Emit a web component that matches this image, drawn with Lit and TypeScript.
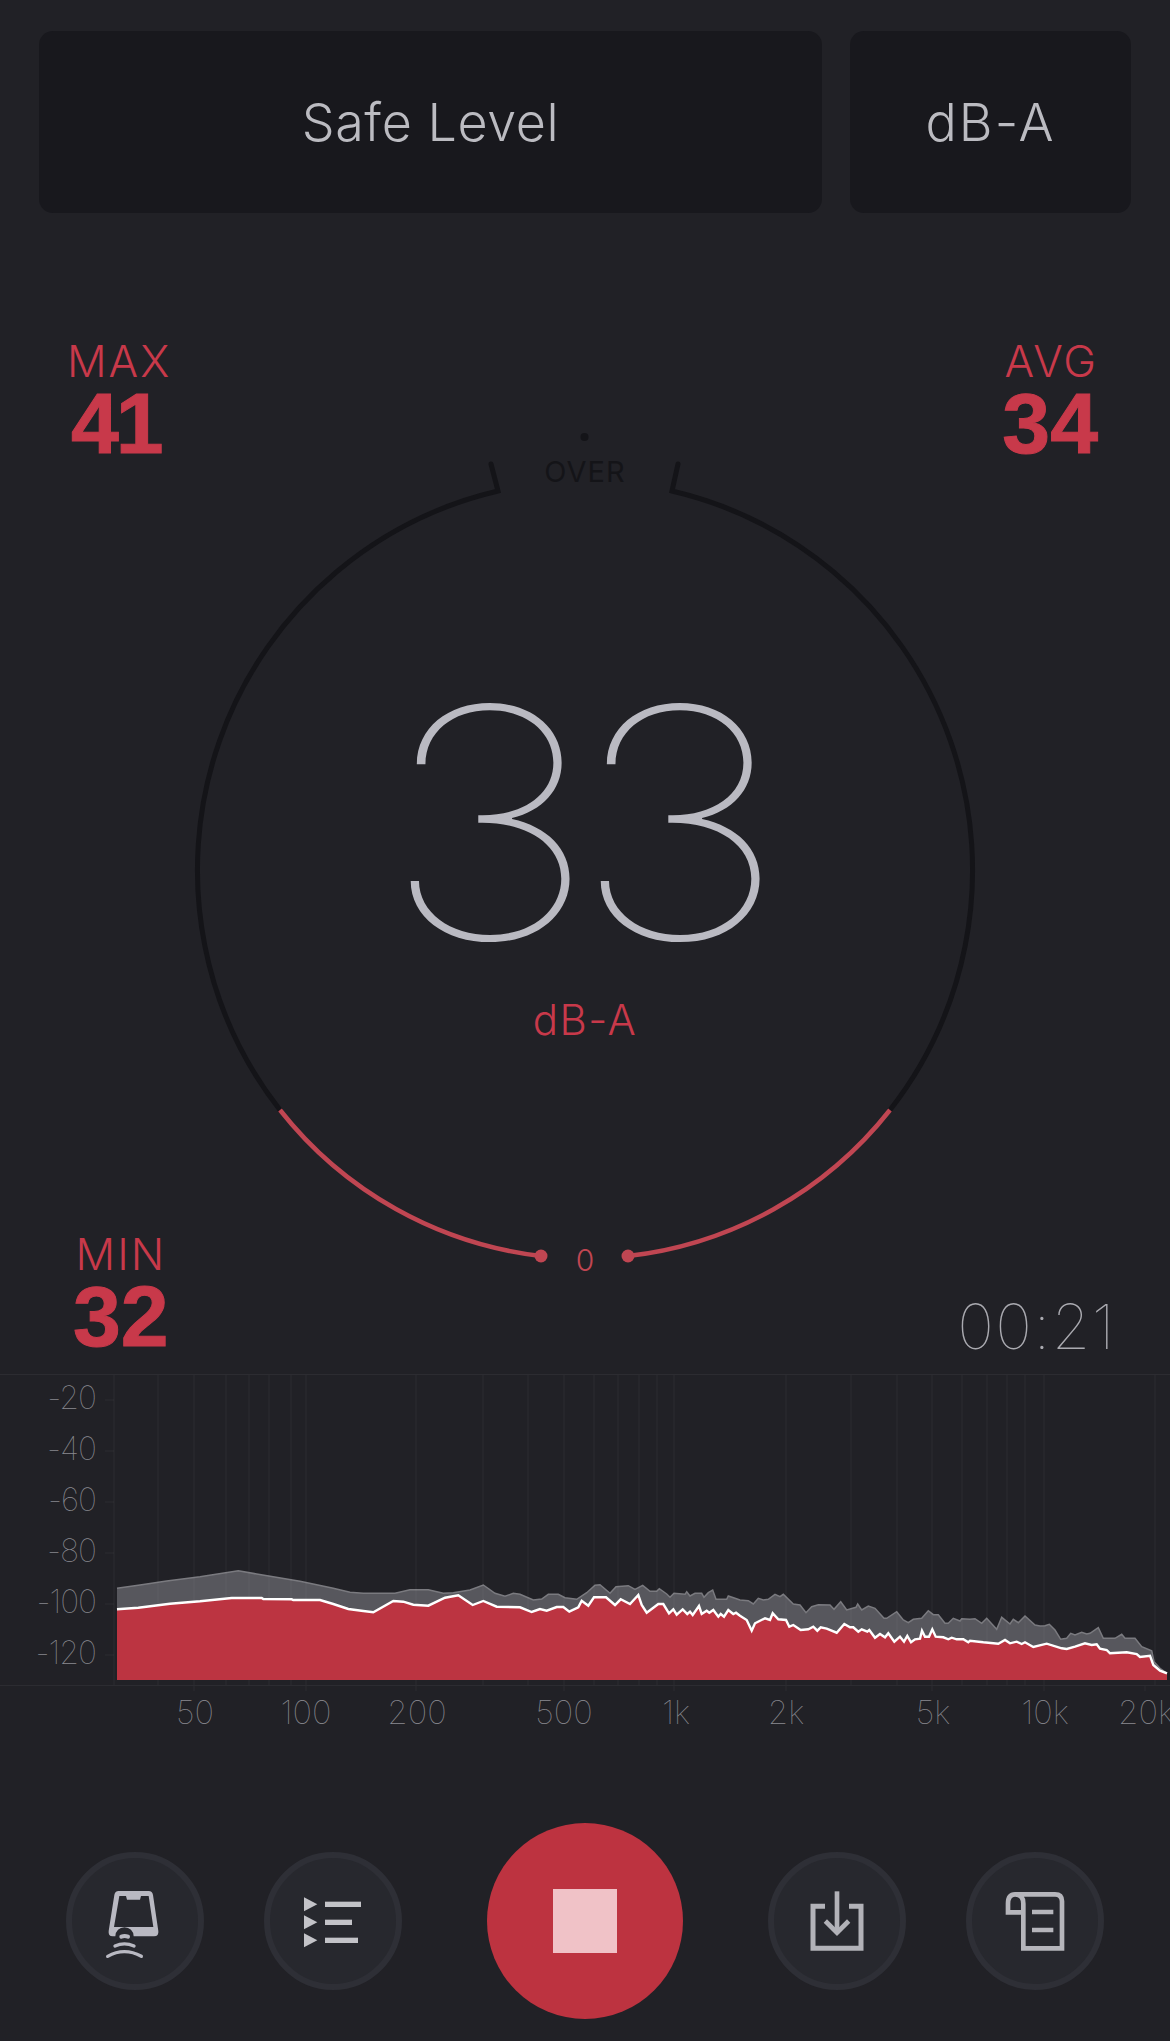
import { LitElement, html, css, svg } from "lit";
import { customElement } from "lit/decorators.js";

type P = [number, number];
const seg = (ox: number, oy: number, s: string): P[] =>
  s.trim().split(/\s+/).map((p) => {
    const [x, y] = p.split(",").map(Number);
    return [ox + x / 3, oy + y / 3] as P;
  });

const GRAY: P[] = [
  ...seg(100, 1570, "51,55 120,45 200,33 300,20 415,2 470,12 600,34 700,55 750,67 790,70 885,70 930,59 985,59 1030,70 1060,68 1110,60 1150,45 1185,70 1215,79 1240,70"),
  ...seg(500, 1570, "60,73 100,90 125,87 145,73 175,73 195,83 230,88 260,68 285,46 300,44 330,70 348,50 385,47 405,58 428,46 450,64 470,64 478,56 500,72 510,82 522,70 555,73 560,65 570,78 585,70 605,70 612,82 625,68 638,60 648,88 680,88 685,78 705,85"),
  ...seg(730, 1590, "30,30 55,32 70,42 85,25 100,30 115,28 135,13 150,20 160,13 190,42 210,45 228,68 245,50 265,44 300,45 312,58 332,35 350,60 378,52 383,42 395,60 415,48 435,55 462,85 470,85 500,65 520,90 535,98 550,88 575,85 595,62 610,74 625,74 645,100 655,100 670,85 690,93 695,86"),
  ...seg(950, 1610, "60,28 75,26 95,40 110,25 140,58 155,22 180,42 190,28 205,38 225,18 255,45 270,48 285,47 298,43 315,60 332,88 350,85 362,70 375,75 395,67 410,72 420,70 445,53 460,85 495,85 515,73 525,85 555,85 575,110 605,122 612,155 630,175 651,190"),
];
const LINE: P[] = [
  ...seg(100, 1570, "51,118 115,113 210,101 300,94 395,84 485,84 490,87 575,88 580,90 660,90 700,102 745,117 790,123 820,127 880,93 910,95 940,104 985,107 1035,83 1075,76 1118,105 1150,93 1190,110"),
  ...seg(500, 1570, "60,112 95,126 120,117 140,122 170,111 190,111 208,125 235,112 245,92 265,107 282,82 318,82 345,105 362,88 390,102 415,75 425,105 440,128 475,102 490,102 507,130 520,118 530,134 548,118 562,132 570,125 578,135 597,108 605,132 620,122 628,128 640,120 655,140 662,132 672,140 685,120 700,132 708,128"),
  ...seg(730, 1590, "30,77 50,90 65,122 75,100 90,92 105,85 120,90 128,70 145,88 168,90 178,110 190,105 212,120 235,118 250,110 262,122 272,112 290,116 320,128 343,102 360,112 370,112 385,125 395,118 412,125 418,120 435,143 450,132 465,142 475,130 493,155 510,140 522,155 532,138 543,157 555,148 570,146 576,122 585,140 597,140 607,118 617,140 640,142 655,148 665,143 680,148 700,148 715,157"),
  ...seg(950, 1610, "60,92 100,97 145,101 165,90 180,100 200,95 215,102 225,97 250,111 290,101 335,115 350,117 375,110 405,100 425,105 440,103 450,116 470,120 480,130 530,127 560,132 570,141 600,137 610,165 630,182 651,190"),
];
const pts = (a: P[]) => a.map(([x, y]) => `${x.toFixed(1)},${y.toFixed(1)}`).join(" ");

const GRID = [114, 158, 194, 226, 249, 269, 291, 306, 416, 483, 528, 564, 594, 618, 639, 657, 674, 786, 851, 897, 932, 962, 987, 1007, 1025, 1044, 1155];
const TALL = [194, 306, 416, 564, 674, 786, 932, 1044, 1145];
const YL: [string, number][] = [["-20", 1409], ["-40", 1460], ["-60", 1511], ["-80", 1562], ["-100", 1613], ["-120", 1664]];
const XL: [string, number][] = [["50", 195], ["100", 306], ["200", 417], ["500", 564], ["1k", 676], ["2k", 786], ["5k", 933], ["10k", 1045], ["20k", 1146]];

@customElement("app-root")
export class AppRoot extends LitElement {
  static styles = css`
    :host { display: block; width: 1170px; height: 2041px; background: #212126; overflow: hidden; font-family: Inter, "Open Sans", sans-serif; }
    .top { display: flex; gap: 28px; padding: 31px 39px 0; }
    .box { height: 182px; border-radius: 14px; background: #18181d; color: #bbbbc1; display: flex; align-items: center; justify-content: center; font-size: 52px; font-weight: 300; letter-spacing: 0.6px; }
    .wide { width: 783px; }
    .narrow { width: 281px; letter-spacing: 2px; }
    .meter { position: relative; height: 1147px; display: flex; flex-direction: column; justify-content: space-between; }
    .gauge { position: absolute; inset: 0; width: 1170px; height: 1147px; }
    .row { position: relative; display: flex; justify-content: space-between; align-items: flex-end; }
    .upper { padding: 126px 72px 0 67px; }
    .lower { padding: 0 54px 5px 73px; }
    .stat { display: flex; flex-direction: column; color: #c8394a; }
    .label { font-size: 44px; font-weight: 300; line-height: 44px; letter-spacing: 2px; }
    .value { font-family: "Liberation Sans", Arial, sans-serif; font-weight: 700; font-size: 86px; line-height: 77px; letter-spacing: 0; margin-top: 2px; -webkit-text-stroke: 1px #c8394a; }
    .max .value { padding-left: 4px; letter-spacing: -3px; }
    .avg { align-items: flex-end; }
    .min { align-items: center; }
    .time { font-weight: 100; font-size: 62px; line-height: 62px; color: #aaaab0; letter-spacing: 1.5px; margin-bottom: -3px; }
    .num { font-weight: 100; font-size: 320px; fill: #babac2; letter-spacing: -21px; }
    .unit { font-size: 42px; font-weight: 300; fill: #c8394a; letter-spacing: 1.5px; }
    .over { font-size: 29px; font-weight: 400; fill: #141418; letter-spacing: 1px; }
    .zero { font-size: 30px; font-weight: 300; fill: #c04652; }
    .chart { display: block; width: 1170px; height: 380px; }
    .chart text { font-weight: 100; fill: #8a8a90; }
    .chart .yl { font-size: 32px; letter-spacing: -1px; }
    .chart .xl { font-size: 33px; letter-spacing: 0; }
    .controls { display: flex; align-items: center; padding: 83px 0 0 66px; }
    .btn { width: 138px; height: 138px; box-sizing: border-box; border-radius: 50%; border: 6px solid #2e2f36; background: #27282e; display: flex; align-items: center; justify-content: center; flex: none; }
    .btn svg { width: 126px; height: 126px; display: block; }
    .gap { margin-left: 60px; }
    .stop { width: 196px; height: 196px; border-radius: 50%; background: #bd3340; margin: 0 85px; display: flex; align-items: center; justify-content: center; flex: none; }
    .square { width: 64px; height: 64px; background: #f0c2c7; }
  `;

  private gauge() {
    return html`<svg class="gauge" viewBox="0 213 1170 1147">
      <g fill="none" stroke="#141418" stroke-width="5" stroke-linecap="round">
        <path d="M491 464 L498 491 A389.5 389.5 0 0 0 280 1110"/>
        <path d="M678 464 L672 491 A389.5 389.5 0 0 1 890 1110"/>
      </g>
      <g fill="none" stroke="#c04652" stroke-width="4.5">
        <path d="M280 1110 A389.5 389.5 0 0 0 541 1256"/>
        <path d="M890 1110 A389.5 389.5 0 0 1 628 1256"/>
      </g>
      <circle cx="541" cy="1256" r="6.5" fill="#c04652"/>
      <circle cx="628" cy="1256" r="6.5" fill="#c04652"/>
      <circle cx="584.5" cy="437" r="4" fill="#141418"/>
      <text class="over" x="585" y="482" text-anchor="middle">OVER</text>
      <text class="num" transform="translate(572 939) scale(1.15 1)" text-anchor="middle">33</text>
      <text class="unit" x="585" y="1035" text-anchor="middle">dB-A</text>
      <text class="zero" x="585" y="1271" text-anchor="middle">0</text>
    </svg>`;
  }

  private chart() {
    const area = [...LINE, [1167, 1680], [117, 1680]] as P[];
    const grayArea = [...GRAY, ...[...LINE].reverse()] as P[];
    return html`<svg class="chart" viewBox="0 1360 1170 380">
      <polygon points=${pts(grayArea)} fill="#57575d"/>
      <polyline points=${pts(GRAY)} fill="none" stroke="#7a7a7f" stroke-width="1.5"/>
      <g stroke="#ffffff" stroke-opacity="0.025" stroke-width="2">
        ${GRID.map((x) => svg`<line x1=${x} x2=${x} y1="1374" y2="1685"/>`)}
        ${TALL.map((x) => svg`<line x1=${x} x2=${x} y1="1685" y2="1691"/>`)}
        ${YL.map(([, y]) => svg`<line x1="105" x2="114" y1=${y - 9} y2=${y - 9}/>`)}
      </g>
      <polygon points=${pts(area)} fill="#bc3441"/>
      <polyline points=${pts(LINE)} fill="none" stroke="#fff" stroke-width="2.4"/>
      <line x1="0" x2="1170" y1="1374.5" y2="1374.5" stroke="#2c2c31"/>
      <line x1="0" x2="1170" y1="1685.5" y2="1685.5" stroke="#2c2c31"/>
      ${YL.map(([t, y]) => svg`<text class="yl" x="96" y=${y} text-anchor="end">${t}</text>`)}
      ${XL.map(([t, x]) => svg`<text class="xl" x=${x} y="1724" text-anchor="middle">${t}</text>`)}
    </svg>`;
  }

  render() {
    return html`
      <div class="top">
        <div class="box wide">Safe Level</div>
        <div class="box narrow">dB-A</div>
      </div>
      <div class="meter">
        ${this.gauge()}
        <div class="row upper">
          <div class="stat max"><span class="label">MAX</span><span class="value">41</span></div>
          <div class="stat avg"><span class="label">AVG</span><span class="value">34</span></div>
        </div>
        <div class="row lower">
          <div class="stat min"><span class="label">MIN</span><span class="value">32</span></div>
          <div class="time">00:21</div>
        </div>
      </div>
      ${this.chart()}
      <div class="controls">
        <div class="btn">
          <svg viewBox="96 173 378 378">
            <path fill="#b9b9c2" fill-rule="evenodd" d="M236 272 H326 Q337 272 339 284 L355 392 Q357 408 342 408 H281 A27 27 0 0 0 226 408 H218 Q204 408 206 392 L223 284 Q225 272 236 272 Z M238 287 L222 380 H340 L326 287 H303 L300 298 H261 L258 287 Z"/>
            <g fill="none" stroke="#b9b9c2" stroke-linecap="round">
              <path stroke-width="12" d="M244 409 Q254 405 264 409"/>
              <path stroke-width="10" d="M225 437 Q253 424 282 437"/>
              <path stroke-width="10" d="M203 468 Q253 440 304 468"/>
            </g>
          </svg>
        </div>
        <div class="btn gap">
          <svg viewBox="690 173 378 378">
            <g fill="#c3c3c8">
              <polygon points="792,291 832,312 792,333"/>
              <polygon points="792,345 832,366 792,387"/>
              <polygon points="792,399 832,420 792,441"/>
              <rect x="855" y="304" width="108" height="16"/>
              <rect x="855" y="358" width="81" height="16"/>
              <rect x="855" y="412" width="99" height="16"/>
            </g>
          </svg>
        </div>
        <div class="stop"><div class="square"></div></div>
        <div class="btn">
          <svg viewBox="132 173 378 378">
            <g fill="none" stroke="#b2b2b8" stroke-width="15">
              <path d="M285 318 H249 V444 H393 V318 H357"/>
              <path stroke-width="14" d="M321 273 V398"/>
              <path stroke-width="14" d="M286 362 L321 397 L356 362"/>
            </g>
          </svg>
        </div>
        <div class="btn gap">
          <svg viewBox="726 173 378 378">
            <g fill="none" stroke="#b5b5bb" stroke-width="14">
              <path d="M855 282 H975 Q996 282 996 303 V444 H880 V310 Q880 282 855 282 Q834 282 834 310 V336 H880"/>
              <path d="M906 335 H970 M906 389 H970"/>
            </g>
          </svg>
        </div>
      </div>
    `;
  }
}
